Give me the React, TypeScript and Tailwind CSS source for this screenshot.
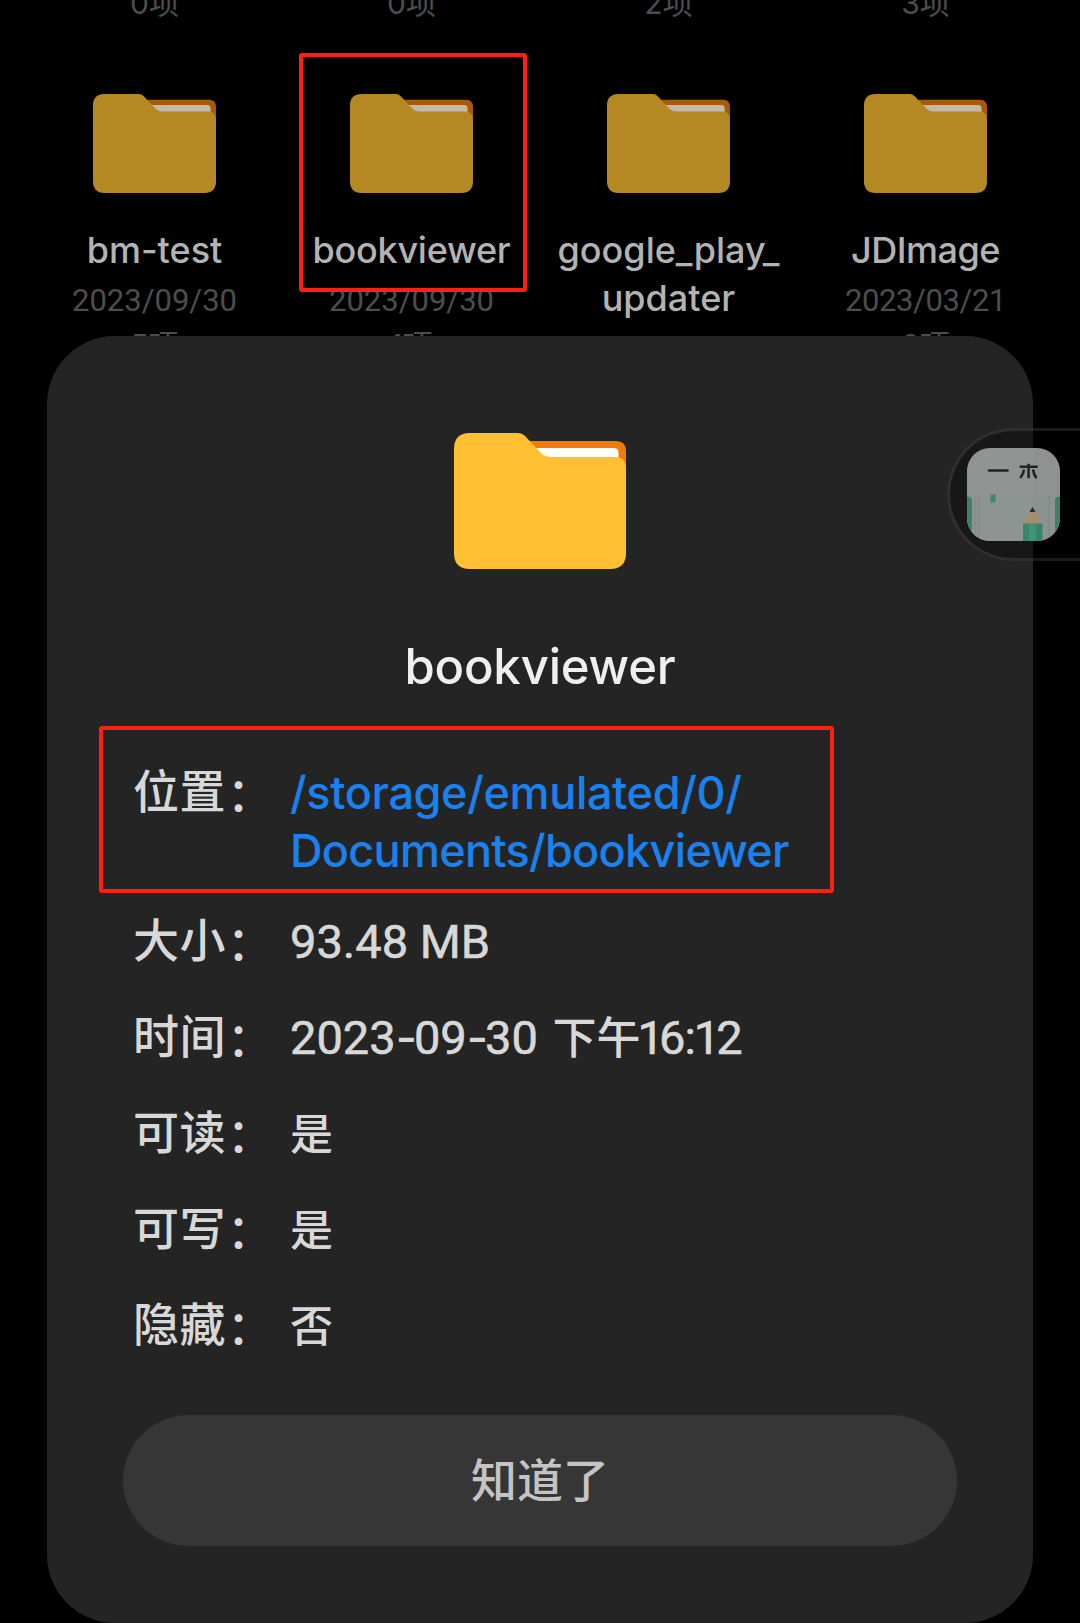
type FolderProps = { className: string; front: string; back: string; paper: string };

function FolderIcon({ className, front, back, paper }: FolderProps) {
  return (
    <svg className={className} viewBox="0 0 172 136" preserveAspectRatio="none" fill="none">
      <path d="M70 8H162Q172 8 172 18V60H70Z" fill={back} />
      <path d="M76 15H160Q164.500 15 164.500 20V40H76Z" fill={paper} />
      <path
        d="M16 0H64Q68 0 71 3L87 20Q91 24 97 24H161Q172 24 172 36V120Q172 136 156 136H16Q0 136 0 120V16Q0 0 16 0Z"
        fill={front}
      />
    </svg>
  );
}

const previousCounts = ["0项", "0项", "2项", "3项"];

const folders = [
  { lines: ["bm-test"], date: "2023/09/30", count: "5项", spacing: "", dateSpacing: "" },
  { lines: ["bookviewer"], date: "2023/09/30", count: "1项", spacing: "tracking-[-0.25px]", dateSpacing: "" },
  { lines: ["google_play_", "updater"], date: "", count: "", spacing: "", dateSpacing: "" },
  { lines: ["JDImage"], date: "2023/03/21", count: "8项", spacing: "tracking-[-0.5px]", dateSpacing: "tracking-[-0.4px]" },
];

function FileGrid() {
  return (
    <div className="mx-auto w-[1028px]">
      <div className="-mt-[19px] grid grid-cols-4 text-center text-[30px] leading-[44px] text-[#4d4d4d]">
        {previousCounts.map((c, i) => (
          <span key={i}>{c}</span>
        ))}
      </div>
      <div className="mt-[69px] grid grid-cols-4">
        {folders.map((f) => (
          <div key={f.lines[0]} className="flex flex-col items-center whitespace-nowrap">
            <FolderIcon className="h-[99px] w-[123px]" front="#b48924" back="#a85a04" paper="#c4b9a6" />
            <div className="mt-[33px] flex flex-col items-center text-[36px] font-medium leading-[48px] text-[#b3b3b3]">
              {f.lines.map((l) => (
                <span key={l} className={f.spacing}>
                  {l}
                </span>
              ))}
            </div>
            <div className="mt-[5px] flex flex-col items-center text-[#4d4d4d]">
              <span className="font-['Roboto',sans-serif] text-[31px] leading-[44px]">
                <span className={f.dateSpacing}>{f.date}</span>
              </span>
              <span className="text-[30px] leading-[44px]">{f.count}</span>
            </div>
          </div>
        ))}
      </div>
    </div>
  );
}

function Row({ label, tall, children }: { label: string; tall?: boolean; children: React.ReactNode }) {
  return (
    <div className={tall ? "flex h-[116px]" : "flex h-[58px]"}>
      <span className="w-[157px] shrink-0 whitespace-nowrap text-[46px] leading-[58px] tracking-[0.5px]">
        {label}
        <span className="relative top-[3px] ml-px">：</span>
      </span>
      <span className="whitespace-nowrap text-[46px] leading-[60px]">{children}</span>
    </div>
  );
}

function Digits({ children }: { children: React.ReactNode }) {
  return (
    <span className="font-['Roboto',sans-serif] text-[47px] font-normal [-webkit-text-stroke:0.6px_currentColor]">
      {children}
    </span>
  );
}

function DetailsDialog() {
  return (
    <div className="absolute left-[47px] top-[336px] flex h-[1287px] w-[986px] flex-col items-center rounded-[68px] bg-[#242424] pt-[97px]">
      <FolderIcon className="h-[136px] w-[172px]" front="#ffc133" back="#ee7c0a" paper="#fffdf6" />
      <h1 className="mt-[68px] text-[49px] font-medium leading-[60px] tracking-[-0.2px] text-[#efefef]">bookviewer</h1>
      <div className="mt-[65px] flex w-full flex-col gap-[38px] pl-[86px] font-medium text-[#d8d8d8]">
        <div className="-mb-[5px]">
          <Row label="位置" tall>
            <span className="flex flex-col pt-[2px] text-[45px] leading-[58px] text-[#1a82ee]">
              <span className="tracking-[-0.35px]">/storage/emulated/0/</span>
              <span className="tracking-[-0.7px]">Documents/bookviewer</span>
            </span>
          </Row>
        </div>
        <Row label="大小">
          <Digits>93.48 MB</Digits>
        </Row>
        <Row label="时间">
          <Digits>2023</Digits>
          <span className="tracking-[-3px]">-</span>
          <Digits>09</Digits>
          <span className="tracking-[-3px]">-</span>
          <Digits>30 </Digits>
          <span className="ml-[3px] text-[44px]">下午</span>
          <Digits>
            <span className="-ml-[3px] tracking-[-5px]">1</span>6
            <span className="-ml-px tracking-[-2px]">:</span>
            <span className="tracking-[-4px]">1</span>2
          </Digits>
        </Row>
        <Row label="可读">
          <span className="text-[43px]">是</span>
        </Row>
        <Row label="可写">
          <span className="text-[43px]">是</span>
        </Row>
        <Row label="隐藏">
          <span className="text-[43px]">否</span>
        </Row>
      </div>
      <button className="mt-[62px] h-[131px] w-[834px] shrink-0 rounded-full bg-[#363636] text-[46px] font-medium text-[#c4c4c4]">
        知道了
      </button>
    </div>
  );
}

function FloatingApp() {
  return (
    <div className="absolute -right-[4px] top-[428px] flex h-[133px] w-[137px] items-center rounded-l-full border-[3px] border-white/10 bg-black/35 pl-[17px]">
      <svg className="h-[93px] w-[93px] opacity-[0.92]" viewBox="0 0 93 93">
        <defs>
          <clipPath id="tile">
            <rect width="93" height="93" rx="23" />
          </clipPath>
        </defs>
        <g clipPath="url(#tile)">
          <rect width="93" height="93" fill="#9c9f9e" />
          <rect x="0" y="47" width="93" height="46" fill="#989f9c" />
          <path d="M0 49Q4 48 5 52V93H0ZM93 49Q89 48 88 52V93H93Z" fill="#3f8c70" />
          <path d="M8 48V93M12 48V93M82 48V93" stroke="#8e9592" strokeWidth="1.200" />
          <path d="M23.500 46.500H28.500V54.500H23.500Z" fill="#3f9475" />
          <path d="M56 76L65.500 59.500L75 76Z" fill="#b59a74" />
          <path d="M62.500 64L65.500 59L68.500 64Z" fill="#2c2c2e" />
          <path d="M56 75.500H75.500V93H56Z" fill="#3a9075" />
          <path d="M62 75.500H69V93H62Z" fill="#46a084" />
          <path d="M22 22.500H40.500" stroke="#252528" strokeWidth="2.600" strokeLinecap="round" />
          <path
            d="M52.700 18.800H70.700M61.600 15.700V30.300M57 21.500Q56.500 26 53.300 30M66 21.500Q66.500 26 69.500 30.300"
            stroke="#252528"
            strokeWidth="2.500"
            fill="none"
          />
        </g>
      </svg>
    </div>
  );
}

export default function App() {
  return (
    <div className="relative flow-root h-[1623px] w-[1080px] overflow-hidden bg-black font-['Inter','Noto_Sans_CJK_SC',sans-serif]">
      <FileGrid />
      <DetailsDialog />
      <FloatingApp />
      <div className="absolute left-[299px] top-[53px] h-[239px] w-[228px] rounded-[3px] border-4 border-[#ff2012]" />
      <div className="absolute left-[99px] top-[726px] h-[167px] w-[735px] rounded-[3px] border-4 border-[#ff2012]" />
    </div>
  );
}
